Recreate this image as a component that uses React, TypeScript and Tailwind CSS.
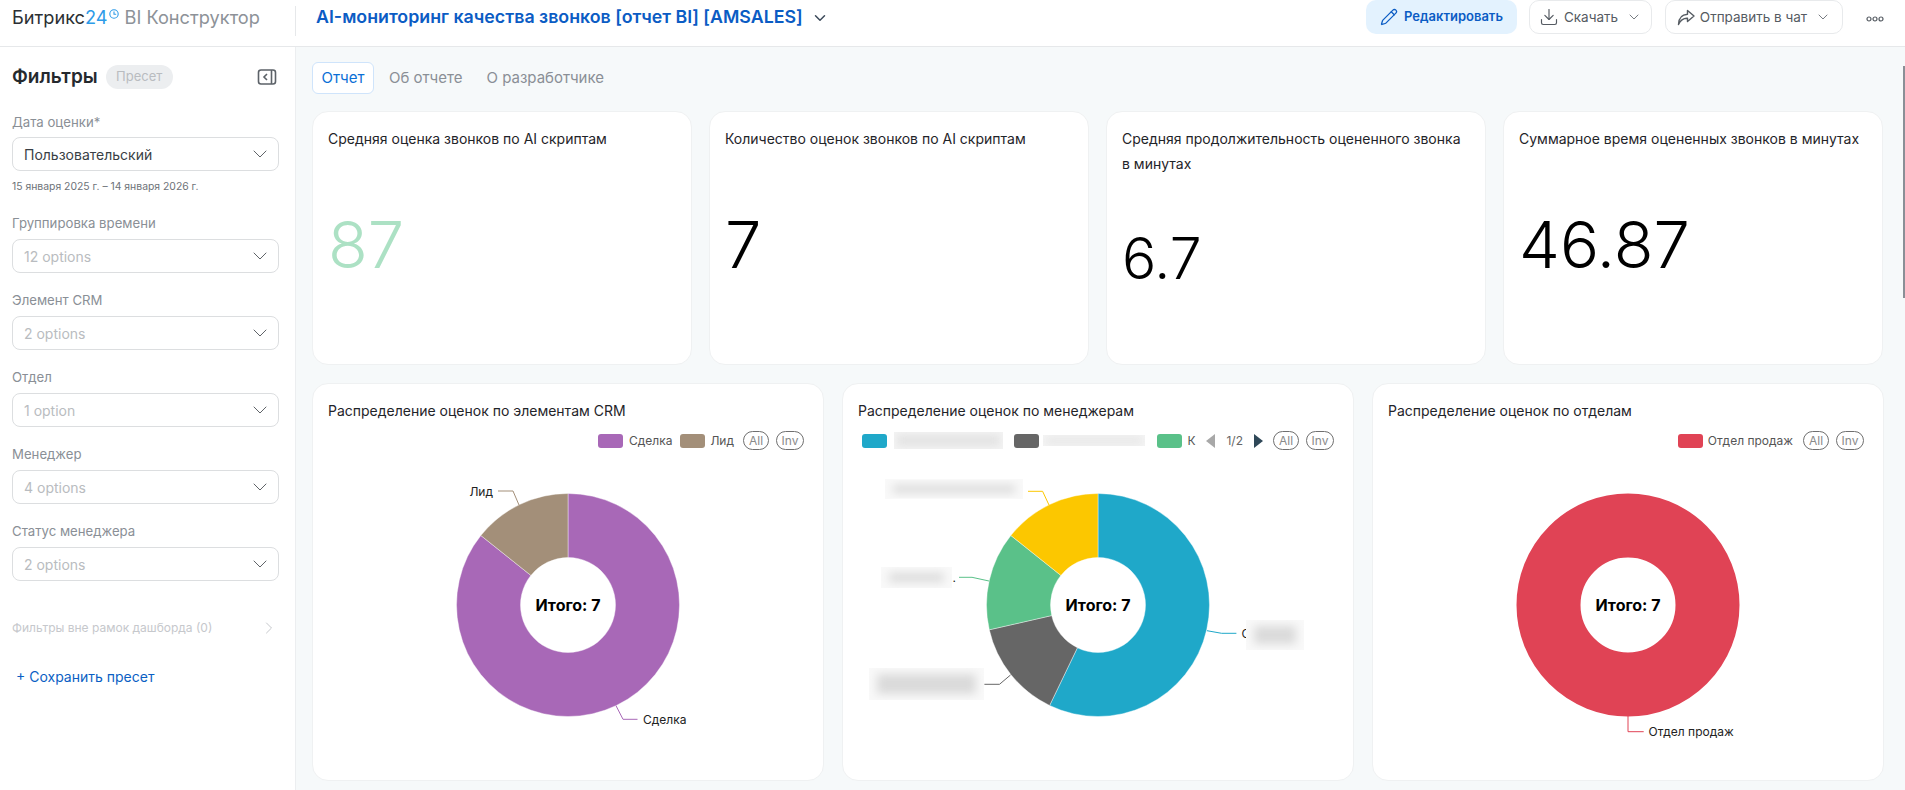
import React from 'react';
import { ChevronDown, ChevronRight, Download, Pencil } from 'lucide-react';

const filters = [
    { label: 'Группировка времени', value: '12 options' },
    { label: 'Элемент CRM', value: '2 options' },
    { label: 'Отдел', value: '1 option' },
    { label: 'Менеджер', value: '4 options' },
    { label: 'Статус менеджера', value: '2 options' },
];

const kpis = [
    { title: 'Средняя оценка звонков по AI скриптам', value: '87', cls: 'text-[65px] text-[#ace1c4] mt-[61px]' },
    { title: 'Количество оценок звонков по AI скриптам', value: '7', cls: 'text-[65px] text-black mt-[61px]' },
    { title: 'Средняя продолжительность оцененного звонка в минутах', value: '6.7', cls: 'text-[57px] text-black mt-[54px]' },
    { title: 'Суммарное время оцененных звонков в минутах', value: '46.87', cls: 'text-[65px] text-black mt-[61px]' },
];

// angles are in sevenths of the circle, clockwise from the top
const slicePath = (from: number, to: number) => {
    const R = 111.5;
    const r = 47.5;
    const a = (from / 7) * 2 * Math.PI;
    const b = (to / 7) * 2 * Math.PI;
    const p = (rad: number, t: number) => `${(rad * Math.sin(t)).toFixed(2)} ${(-rad * Math.cos(t)).toFixed(2)}`;
    const large = to - from > 3.5 ? 1 : 0;
    return `M${p(R, a)}A${R} ${R} 0 ${large} 1 ${p(R, b)}L${p(r, b)}A${r} ${r} 0 ${large} 0 ${p(r, a)}Z`;
};

const Pill = ({ children, className }: { children: string; className: string }) => (
    <span className={`flex h-[19px] items-center justify-center rounded-full border border-[#6f6f6f] text-[12px] text-[#8a8a8a] ${className}`}>{children}</span>
);

const Swatch = ({ className }: { className: string }) => <span className={`h-[14px] w-[25px] shrink-0 rounded-[3px] ${className}`} />;

const Smudge = ({ className }: { className: string }) => (
    <span className={`block shrink-0 overflow-hidden bg-[#f4f4f4] ${className}`}>
        <span className="m-[3px] block h-[calc(100%-6px)] bg-[#e2e2e2] blur-[4px]" />
    </span>
);

const Total = () => (
    <text x="0" y="0" textAnchor="middle" dominantBaseline="central" fontSize="16" fontWeight="700" fill="#000">
        Итого: 7
    </text>
);

const ChartCard = ({ title, legend, children }: { title: string; legend: React.ReactNode; children: React.ReactNode }) => (
    <div className="flex h-[398px] w-[512px] flex-col rounded-[16px] border border-[#eff1f2] bg-white">
        <div className="pl-[15px] pt-[17px] text-[14px] leading-[20px] text-[#1f2429]">{title}</div>
        <div className="mt-[10px] flex h-[19px] items-center justify-end pr-[19px] text-[12px] text-[#555]">{legend}</div>
        <svg className="block h-[326px] w-full" viewBox="-255 -155 510 326">
            <defs>
                <filter id="smudge" x="-30%" y="-60%" width="160%" height="220%">
                    <feGaussianBlur stdDeviation="5" />
                </filter>
            </defs>
            {children}
            <Total />
        </svg>
    </div>
);

const BlurLabel = ({ x, y, w, h }: { x: number; y: number; w: number; h: number }) => (
    <g>
        <rect x={x} y={y} width={w} height={h} fill="#f9f9f9" />
        <clipPath id={`clip${x}`}>
            <rect x={x} y={y} width={w} height={h} />
        </clipPath>
        <g clipPath={`url(#clip${x})`}>
            <rect x={x + 8} y={y + 6} width={w - 16} height={h - 12} fill="#dadada" filter="url(#smudge)" />
        </g>
    </g>
);

const Select = ({ value, dim }: { value: string; dim?: boolean }) => (
    <div className="flex h-[34px] w-[267px] items-center justify-between rounded-[8px] border border-[#dcdee0] pl-[11px] pr-[6px]">
        <span className={`text-[14px] ${dim ? 'text-[#b9bcc0]' : 'text-[#3a3f45]'}`}>{value}</span>
        <ChevronDown className="h-[24px] w-[24px] text-[#5f6368]" strokeWidth={1} />
    </div>
);

const Sidebar = () => (
    <aside className="w-[296px] shrink-0 border-r border-[#eceef0] bg-white pl-[12px]">
        <div className="mt-[18px] flex h-[24px] items-center">
            <span className="text-[19px] font-semibold text-[#25292e]">Фильтры</span>
            <span className="ml-[8px] flex h-[24px] w-[67px] items-center justify-center rounded-full bg-[#eceef0] text-[13px] text-[#b9bcc0]">Пресет</span>
            <svg className="ml-[84px] h-[16px] w-[20px]" viewBox="0 0 20 16" fill="none" stroke="#5c6268" strokeWidth="1.6">
                <rect x="1.5" y="1" width="17" height="14" rx="2.5" />
                <path d="M14.5 1v14M10 5l-3 3 3 3" />
            </svg>
        </div>
        <div className="mt-[23px] text-[13.2px] leading-[20px] text-[#8a8f96]">Дата оценки*</div>
        <div className="mt-[5px]">
            <Select value="Пользовательский" />
        </div>
        <div className="mt-[8px] text-[10.4px] leading-[16px] text-[#6d7278]">15 января 2025 г. – 14 января 2026 г.</div>
        <div className="mt-[18px] flex flex-col gap-[17px]">
            {filters.map((f) => (
                <div key={f.label}>
                    <div className="mb-[6px] text-[13.2px] leading-[20px] text-[#8a8f96]">{f.label}</div>
                    <Select value={f.value} dim />
                </div>
            ))}
        </div>
        <div className="mt-[37px] flex w-[267px] items-center justify-between text-[12px] leading-[18px] text-[#c6c8cc]">
            <span>Фильтры вне рамок дашборда (0)</span>
            <ChevronRight className="h-[20px] w-[20px]" strokeWidth={1.2} />
        </div>
        <div className="ml-[4px] mt-[29px] text-[14px] leading-[20px] text-[#0b5fc4]">+ Сохранить пресет</div>
    </aside>
);

const Header = () => (
    <header className="flex h-[47px] shrink-0 border-b border-[#e6e8ea] bg-white">
        <div className="flex w-[296px] shrink-0 items-center pl-[12px] pb-[11px] pt-[0px]">
            <span className="text-[18.200px] text-[#2b2f33]">Битрикс</span>
            <span className="text-[18.200px] text-[#2d9be8]">24</span>
            <svg className="mb-[7px] ml-[1px] h-[10px] w-[10px]" viewBox="0 0 10 10" fill="none" stroke="#2d9be8" strokeWidth="1.1">
                <circle cx="5" cy="5" r="4.2" />
                <path d="M5 2.6V5.2H7.2" />
            </svg>
            <span className="ml-[6px] text-[18.200px] text-[#8d9298]">BI Конструктор</span>
        </div>
        <div className="mb-[10px] mt-[6px] w-px bg-[#e6e8ea] -ml-[1px]" />
        <div className="ml-[20px] flex items-center pb-[11px]">
            <span className="text-[17.800px] font-semibold text-[#0b5cc4]">AI-мониторинг качества звонков [отчет BI] [AMSALES]</span>
            <ChevronDown className="ml-[8px] h-[18px] w-[18px] text-[#3c4a5a]" strokeWidth={2} />
        </div>
        <div className="ml-auto flex items-start pr-[21px]">
            <button className="flex h-[34px] w-[151px] items-center justify-center gap-[6px] rounded-[10px] bg-[#e3f2fe] text-[13px] font-semibold text-[#0b5cc4]">
                <Pencil className="h-[18px] w-[18px]" strokeWidth={1.7} />
                Редактировать
            </button>
            <button className="ml-[12px] flex h-[34px] w-[123px] items-center justify-center gap-[5px] rounded-[10px] border border-[#e8eaec] text-[13.500px] text-[#555b62]">
                <Download className="h-[20px] w-[20px]" strokeWidth={1.4} />
                Скачать
                <ChevronDown className="ml-[3px] h-[16px] w-[16px]" strokeWidth={1.2} />
            </button>
            <button className="ml-[13px] flex h-[34px] w-[178px] items-center justify-center gap-[5px] rounded-[10px] border border-[#e8eaec] text-[13.500px] text-[#555b62]">
                <svg className="h-[17px] w-[18px]" viewBox="0 0 18 17" fill="none" stroke="#555b62" strokeWidth="1.4" strokeLinejoin="round">
                    <path d="M10.5 1.500 17 7l-6.500 5.500V9.300C6.500 9.100 3.500 11 1.500 15.500c.2-6 3.500-10 9-10.300z" />
                </svg>
                Отправить в чат
                <ChevronDown className="ml-[3px] h-[16px] w-[16px]" strokeWidth={1.2} />
            </button>
            <svg className="ml-[23px] mt-[16px] h-[6px] w-[18px]" viewBox="0 0 18 6" fill="none" stroke="#555b62" strokeWidth="1.2">
                <circle cx="3" cy="3" r="2" />
                <circle cx="9" cy="3" r="2" />
                <circle cx="15" cy="3" r="2" />
            </svg>
        </div>
    </header>
);

const App = () => {
    return (
        <div className="relative flex h-[790px] w-[1905px] flex-col overflow-hidden bg-white font-['Inter',sans-serif]">
            <Header />
            <div className="flex min-h-0 flex-1">
                <Sidebar />
                <main className="min-w-0 flex-1 bg-[#f6f9fa] pl-[16px] pr-[21px]">
                    <div className="mt-[15px] flex h-[32px] items-center text-[15px] text-[#8a8f96]">
                        <span className="flex h-[32px] w-[62px] items-center justify-center rounded-[6px] border border-[#cfe4fb] bg-white text-[#0b6fd6]">Отчет</span>
                        <span className="ml-[15px]">Об отчете</span>
                        <span className="ml-[24px]">О разработчике</span>
                    </div>
                    <div className="mt-[17px] flex gap-[17px]">
                        {kpis.map((k) => (
                            <div key={k.title} className="h-[254px] w-[380px] rounded-[16px] border border-[#eff1f2] bg-white pl-[15px] pr-[14px] pt-[14px]">
                                <div className="text-[14px] leading-[25px] text-[#1f2429]">{k.title}</div>
                                <div className={`font-light leading-none ${k.cls}`}>{k.value}</div>
                            </div>
                        ))}
                    </div>
                    <div className="mt-[18px] flex gap-[18px]">
                        <ChartCard
                            title="Распределение оценок по элементам CRM"
                            legend={
                                <>
                                    <Swatch className="bg-[#a868b7]" />
                                    <span className="ml-[6px]">Сделка</span>
                                    <Swatch className="ml-[8px] bg-[#a38f79]" />
                                    <span className="ml-[5px]">Лид</span>
                                    <Pill className="ml-[9px] w-[26px]">All</Pill>
                                    <Pill className="ml-[7px] w-[28px]">Inv</Pill>
                                </>
                            }
                        >
                            <path d={slicePath(0, 6)} fill="#a868b7" stroke="#fff" strokeWidth="0.4" />
                            <path d={slicePath(6, 7)} fill="#a38f79" stroke="#fff" strokeWidth="0.4" />
                            <path d="M-70-114H-55L-49-100" fill="none" stroke="#a38f79" />
                            <path d="M48 100.700 55 114.300H69.500" fill="none" stroke="#a868b7" />
                            <text x="-75" y="-114" textAnchor="end" dominantBaseline="central" fontSize="12" fill="#222">Лид</text>
                            <text x="75" y="114" dominantBaseline="central" fontSize="12" fill="#222">Сделка</text>
                        </ChartCard>
                        <ChartCard
                            title="Распределение оценок по менеджерам"
                            legend={
                                <>
                                    <Swatch className="bg-[#1fa8c9]" />
                                    <Smudge className="ml-[7px] h-[17px] w-[109px]" />
                                    <Swatch className="ml-[11px] bg-[#666666]" />
                                    <Smudge className="ml-[4px] h-[11px] w-[102px]" />
                                    <Swatch className="ml-[12px] bg-[#5ac189]" />
                                    <span className="ml-[5px]">К</span>
                                    <svg className="ml-[11px] h-[14px] w-[9px]" viewBox="0 0 9 14" fill="#a8a8a8">
                                        <path d="M9 0v14L0 7z" />
                                    </svg>
                                    <span className="ml-[11px] text-[#666]">1/2</span>
                                    <svg className="ml-[11px] h-[14px] w-[9px]" viewBox="0 0 9 14" fill="#2f4858">
                                        <path d="M0 0v14l9-7z" />
                                    </svg>
                                    <Pill className="ml-[10px] w-[26px]">All</Pill>
                                    <Pill className="ml-[7px] w-[28px]">Inv</Pill>
                                </>
                            }
                        >
                            <path d={slicePath(0, 4)} fill="#1fa8c9" stroke="#fff" strokeWidth="0.4" />
                            <path d={slicePath(4, 5)} fill="#666666" stroke="#fff" strokeWidth="0.4" />
                            <path d={slicePath(5, 6)} fill="#5ac189" stroke="#fff" strokeWidth="0.4" />
                            <path d={slicePath(6, 7)} fill="#fcc700" stroke="#fff" strokeWidth="0.4" />
                            <path d="M-70-113.700H-55.400L-49-100" fill="none" stroke="#fcc700" />
                            <path d="M-139-27.700H-126L-109-24" fill="none" stroke="#5ac189" />
                            <path d="M-113.600 79.300H-98.500L-87.500 70" fill="none" stroke="#666666" />
                            <path d="M109 25.700 123.600 28.300H138.400" fill="none" stroke="#1fa8c9" />
                            <text x="143.600" y="28" dominantBaseline="central" fontSize="12" fill="#222">С</text>
                            <text x="-145.500" y="-28" dominantBaseline="central" fontSize="12" fill="#222">.</text>
                            <BlurLabel x={-213} y={-126} w={138} h={20} />
                            <BlurLabel x={-217} y={-38} w={71} h={21} />
                            <BlurLabel x={-229} y={63} w={115} h={32} />
                            <BlurLabel x={148} y={15} w={58} h={30} />
                        </ChartCard>
                        <ChartCard
                            title="Распределение оценок по отделам"
                            legend={
                                <>
                                    <Swatch className="bg-[#e04355]" />
                                    <span className="ml-[5px]">Отдел продаж</span>
                                    <Pill className="ml-[10px] w-[26px]">All</Pill>
                                    <Pill className="ml-[7px] w-[28px]">Inv</Pill>
                                </>
                            }
                        >
                            <circle r="79.500" fill="none" stroke="#e04355" strokeWidth="64" />
                            <path d="M0 111V126.700H15.700" fill="none" stroke="#e04355" />
                            <text x="20.500" y="126" dominantBaseline="central" fontSize="12" fill="#222">Отдел продаж</text>
                        </ChartCard>
                    </div>
                </main>
            </div>
            <div className="absolute right-0 top-[66px] h-[232px] w-[2px] bg-[#8a8f96]" />
        </div>
    );
};

export default App;
